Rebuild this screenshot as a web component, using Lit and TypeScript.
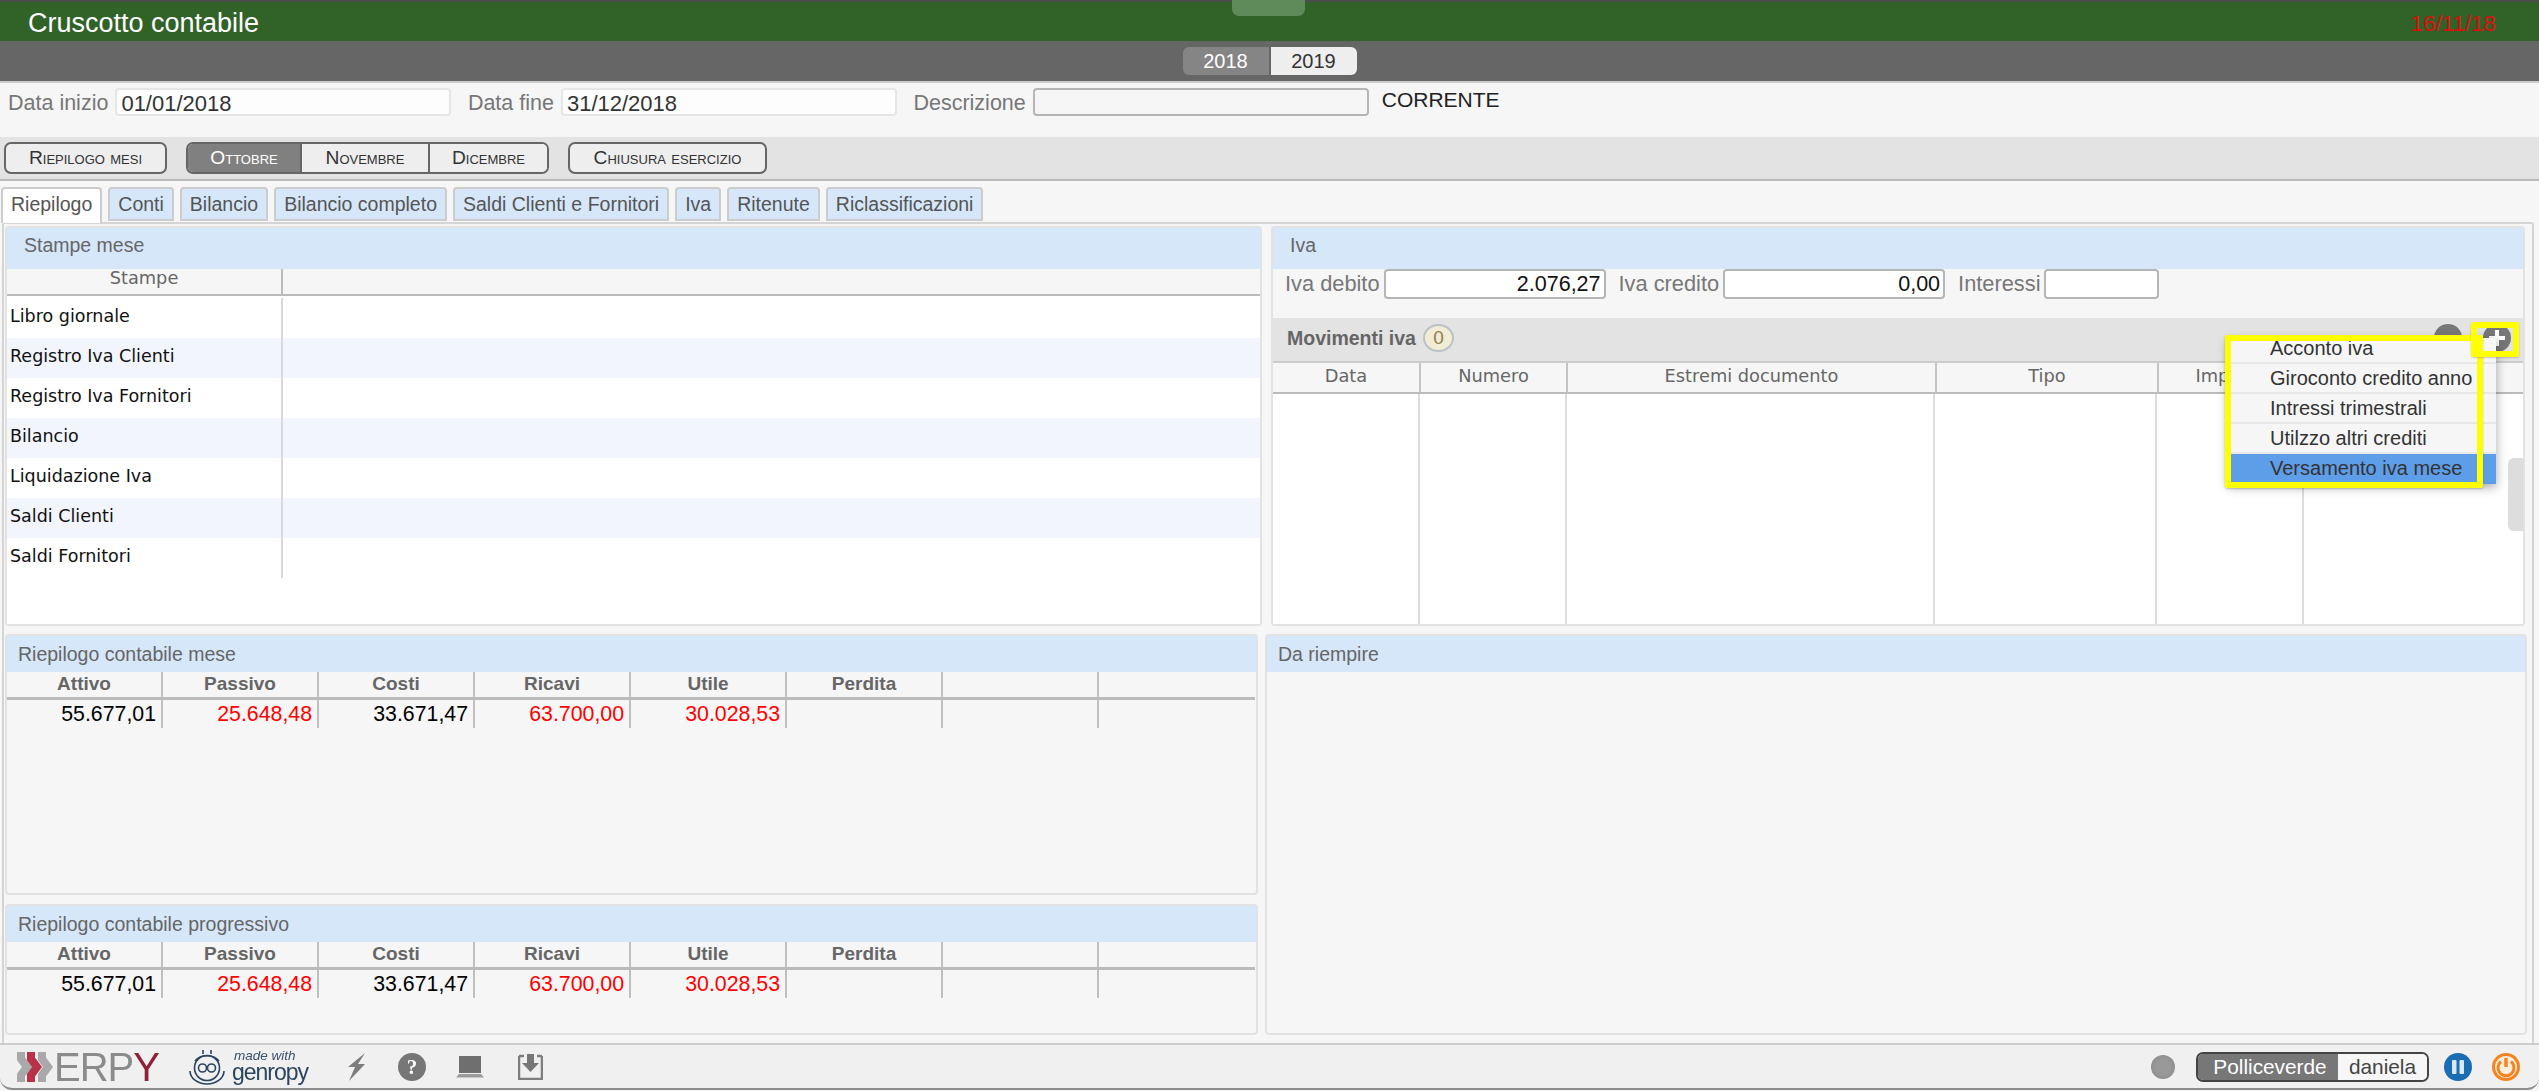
import { LitElement, html, css, svg } from 'lit';
import { customElement } from 'lit/decorators.js';

const SANS = css`"Liberation Sans", Arial, sans-serif`;
const GRID_FONT = css`"DejaVu Sans", Verdana, sans-serif`;

const TABS = ['Riepilogo', 'Conti', 'Bilancio', 'Bilancio completo', 'Saldi Clienti e Fornitori', 'Iva', 'Ritenute', 'Riclassificazioni'];
const STAMPE = ['Libro giornale', 'Registro Iva Clienti', 'Registro Iva Fornitori', 'Bilancio', 'Liquidazione Iva', 'Saldi Clienti', 'Saldi Fornitori'];
const MENU = ['Acconto iva', 'Giroconto credito anno', 'Intressi trimestrali', 'Utilzzo altri crediti', 'Versamento iva mese'];
const MOV_COLS = ['Data', 'Numero', 'Estremi documento', 'Tipo', 'Importo', ''];
const HEADS = ['Attivo', 'Passivo', 'Costi', 'Ricavi', 'Utile', 'Perdita', '', ''];
const VALUES = [
  { v: '55.677,01', red: false },
  { v: '25.648,48', red: true },
  { v: '33.671,47', red: false },
  { v: '63.700,00', red: true },
  { v: '30.028,53', red: true },
  { v: '', red: false },
  { v: '', red: false },
  { v: '', red: false },
];

@customElement('app-root')
export class AppRoot extends LitElement {
  static styles = css`
    :host {
      display: block;
      font-family: ${SANS};
      color: #333;
    }

    .app {
      height: 1091px;
      display: flex;
      flex-direction: column;
      background: #f6f6f6;
      overflow: hidden;
    }

    .title-bar {
      position: relative;
      height: 41px;
      flex: none;
      box-sizing: border-box;
      border-top: 2px solid #4c4c4c;
      background: #316228;
      display: flex;
      align-items: center;
      justify-content: space-between;
      padding: 3px 43px 0 28px;
      color: #fff;
      font-size: 27px;
    }
    .title-bar .date { color: #e00d0d; font-size: 22.3px; margin-top: 2px; }
    .handle {
      position: absolute;
      left: 1232px;
      top: -2px;
      width: 73px;
      height: 16px;
      background: #5f8a59;
      border-radius: 0 0 7px 7px;
    }

    .year-bar {
      height: 42px;
      flex: none;
      box-sizing: border-box;
      background: #666;
      border-bottom: 2px solid #ccc;
      display: flex;
      justify-content: center;
      padding-top: 6px;
    }
    .years { display: flex; height: 28px; }
    .years div {
      width: 86px;
      display: flex;
      align-items: center;
      justify-content: center;
      font-size: 20px;
    }
    .years .off { background: #858585; color: #fff; border-radius: 6px 0 0 6px; margin-right: 2px; }
    .years .on { background: #eee; color: #333; border-radius: 0 6px 6px 0; }

    .form-row {
      height: 54px;
      flex: none;
      display: flex;
      align-items: flex-start;
      padding: 5px 0 0 8px;
      box-sizing: border-box;
      font-size: 21.5px;
      color: #777;
    }
    .label { line-height: 31px; margin-right: 7px; white-space: nowrap; }
    .field {
      box-sizing: border-box;
      height: 28px;
      width: 336px;
      border: 2px solid #e6e6e6;
      border-radius: 4px;
      background: #fdfdfd;
      color: #333;
      font-size: 22px;
      line-height: 27px;
      padding: 0 4px;
      margin-right: 16.5px;
    }
    .field.dark { border-color: #b5b5b5; background: #f6f6f6; margin-right: 13px; }
    .corrente { color: #222; font-size: 21px; line-height: 20px; margin-top: 2px; }

    .toolbar {
      height: 44px;
      flex: none;
      box-sizing: border-box;
      background: #e3e3e3;
      border-bottom: 2px solid #bbb;
      display: flex;
      padding: 5px 0 0 4px;
    }
    .btn {
      box-sizing: border-box;
      height: 32px;
      border: 2px solid #666;
      border-radius: 7px;
      background: #eee;
      color: #333;
      font-variant: small-caps;
      font-size: 19.2px;
      display: flex;
      align-items: center;
      justify-content: center;
    }
    .btn.riepilogo { width: 163px; margin-right: 19px; }
    .btn.chiusura { width: 199px; margin-left: 19px; }
    .segment { display: flex; height: 32px; width: 363px; box-sizing: border-box; border: 2px solid #666; border-radius: 7px; overflow: hidden; }
    .segment div {
      display: flex;
      align-items: center;
      justify-content: center;
      background: #eee;
      font-variant: small-caps;
      font-size: 19.2px;
      border-right: 2px solid #666;
      box-sizing: border-box;
    }
    .segment div:nth-child(1) { width: 114px; background: #808080; color: #fff; }
    .segment div:nth-child(2) { width: 128px; }
    .segment div:nth-child(3) { flex: 1; border-right: none; }

    .tabs {
      height: 41px;
      flex: none;
      box-sizing: border-box;
      display: flex;
      gap: 6px;
      padding: 6px 0 0 1px;
      position: relative;
      z-index: 1;
    }
    .tab {
      box-sizing: border-box;
      height: 34px;
      border: 2px solid #ccc;
      border-radius: 4px 4px 0 0;
      background: #d6e7fa;
      color: #555;
      font-size: 19.5px;
      line-height: 30px;
      padding: 0 8px;
      white-space: nowrap;
    }
    .tab.active { background: #fff; height: 36px; border-bottom: none; }

    .workspace {
      flex: 1;
      min-height: 0;
      margin: 0 5px 0 2px;
      border: 2px solid #d4d4d4;
      border-bottom: none;
      border-radius: 3px 3px 0 0;
      padding: 2px 0 0 1px;
      display: flex;
      flex-direction: column;
      gap: 8px;
      box-sizing: border-box;
    }
    .top-row { display: grid; grid-template-columns: 1257px 1254px; gap: 9px; height: 400px; flex: none; }
    .bottom-row { display: grid; grid-template-columns: 1253px 1262px; gap: 7px; height: 401px; flex: none; }
    .stack { display: grid; grid-template-rows: 261px 131px; gap: 9px; min-height: 0; }

    .panel {
      position: relative;
      box-sizing: border-box;
      border: 2px solid #e2e2e2;
      border-radius: 4px;
      background: #f6f6f6;
      display: flex;
      flex-direction: column;
      min-height: 0;
    }
    .panel-head {
      flex: none;
      box-sizing: border-box;
      background: #d6e7fa;
      color: #666;
      font-size: 19.5px;
      display: flex;
      align-items: center;
    }
    .panel-head.tall { height: 41px; padding: 0 0 6px 17px; }
    .panel-head.short { height: 36px; padding-left: 11px; }

    .stampe-head {
      flex: none;
      display: grid;
      grid-template-columns: 276px 1fr;
      height: 27px;
      box-sizing: border-box;
      border-bottom: 2px solid #bbb;
      font-family: ${GRID_FONT};
      font-size: 17.8px;
      color: #666;
    }
    .stampe-head div { text-align: center; line-height: 18px; border-right: 2px solid #bbb; }
    .stampe-head div:last-child { border-right: none; }
    .stampe-body { flex: 1; background: #fff; padding-top: 2px; }
    .stampe-row {
      display: grid;
      grid-template-columns: 276px 1fr;
      height: 40px;
      font-family: ${GRID_FONT};
      font-size: 17.5px;
      color: #111;
      line-height: 37px;
    }
    .stampe-row:nth-child(even) { background: #f2f6fc; }
    .stampe-row div:first-child { border-right: 2px solid #d8d8d8; padding-left: 3px; box-sizing: border-box; }

    .iva-form {
      flex: none;
      height: 49px;
      box-sizing: border-box;
      display: flex;
      align-items: flex-start;
      padding: 0 0 0 12px;
      font-size: 21.8px;
      color: #777;
    }
    .iva-form .label { line-height: 30px; margin-right: 4px; }
    .num {
      box-sizing: border-box;
      height: 30px;
      border: 2px solid #b5b5b5;
      border-radius: 4px;
      background: #fff;
      color: #111;
      font-size: 21.5px;
      line-height: 26px;
      text-align: right;
      padding-right: 3px;
      margin-right: 13px;
    }
    .num.w222 { width: 222px; }
    .num.w115 { width: 115px; margin-right: 0; }

    .mov-bar {
      flex: none;
      height: 43px;
      box-sizing: border-box;
      background: #e3e3e3;
      display: flex;
      align-items: center;
      padding: 0 12px 3px 14px;
      font-size: 19.5px;
      font-weight: 700;
      color: #666;
    }
    .badge {
      box-sizing: border-box;
      width: 31px;
      height: 28px;
      margin-left: 7px;
      border: 2px solid #b8c2c8;
      border-radius: 50%;
      background: #f3ecd4;
      color: #8a8050;
      font-weight: 400;
      font-size: 19px;
      display: flex;
      align-items: center;
      justify-content: center;
    }
    .mov-actions { margin-left: auto; display: flex; gap: 21px; }
    .mov-actions svg { display: block; }

    .mov-head, .mov-body { display: grid; }
    .mov-head {
      grid-template-columns: 148px 147px 369px 222px 145px 1fr;
      flex: none;
      height: 33px;
      box-sizing: border-box;
      border-top: 2px solid #ccc;
      border-bottom: 2px solid #bbb;
      font-family: ${GRID_FONT};
      font-size: 17.8px;
      color: #666;
    }
    .mov-head div { text-align: center; line-height: 25px; border-right: 2px solid #c4c4c4; }
    .mov-head div:last-child { border-right: none; }
    .mov-body { grid-template-columns: 147px 147px 368px 222px 147px 1fr; flex: 1; background: #fff; }
    .mov-body div { border-right: 2px solid #ddd; }
    .mov-body div:last-child { border-right: none; }

    .scroll-thumb {
      position: absolute;
      left: 1235px;
      top: 230px;
      width: 15px;
      height: 73px;
      background: #ddd;
      border-radius: 6px 0 0 6px;
    }
    .menu {
      position: absolute;
      left: 955px;
      top: 110px;
      width: 268px;
      height: 146px;
      overflow: hidden;
      background: #f6f6f6;
      box-shadow: 0 3px 10px rgba(0, 0, 0, .35);
      z-index: 2;
      font-size: 20px;
      color: #333;
    }
    .menu-list { margin-top: -4px; }
    .menu-item {
      box-sizing: border-box;
      height: 30px;
      line-height: 28px;
      padding-left: 42px;
      border-bottom: 2px solid #e8e8e8;
      white-space: nowrap;
    }
    .menu-item:last-child { background: #5e9de8; border-bottom: none; }
    .mark {
      position: absolute;
      box-sizing: border-box;
      border: 6px solid #ff0;
      z-index: 3;
      box-shadow: 0 1px 2px rgba(0, 0, 0, .2);
    }
    .mark.list { left: 952px; top: 107px; width: 258px; height: 153px; border-radius: 2px; }
    .mark.plus { left: 1198px; top: 94px; width: 48px; height: 35px; border-radius: 2px; }

    .sum-head, .sum-row {
      display: grid;
      grid-template-columns: repeat(8, 156px);
      width: 1248px;
    }
    .sum-head {
      flex: none;
      height: 28px;
      box-sizing: border-box;
      border-bottom: 3px solid #bbb;
      font-size: 19px;
      font-weight: 700;
      color: #666;
    }
    .sum-head div { text-align: center; line-height: 24px; border-right: 2px solid #c0c0c0; }
    .sum-row { height: 28px; font-size: 21.3px; color: #000; }
    .sum-row div { text-align: right; line-height: 28px; padding-right: 5px; border-right: 2px solid #c0c0c0; box-sizing: border-box; }
    .sum-head div:last-child, .sum-row div:last-child { border-right: none; }
    .sum-row .red { color: #f00; }

    .footer {
      flex: none;
      height: 47px;
      margin-bottom: 1px;
      box-sizing: border-box;
      border-top: 2px solid #ccc;
      border-bottom: 2px solid #8c8c8c;
      border-radius: 0 0 12px 12px;
      background: #f0f0f0;
      display: flex;
      align-items: center;
      padding: 0 19px 0 17px;
    }
    .foot-left { display: flex; align-items: center; filter: blur(.4px); }
    .erpy-mark { display: block; margin-right: 1px; }
    .erpy-word { font-size: 40px; line-height: 30px; color: #8b8b8b; letter-spacing: -1px; width: 133px; }
    .erpy-word span { color: #8f2035; }
    .gen-mark { display: block; margin-right: 5px; }
    .gen-word { color: #2b4560; width: 114px; line-height: 1; }
    .gen-word small { display: block; font-style: italic; font-size: 13.5px; color: #3c5068; margin-left: 2px; }
    .gen-word b { display: block; font-weight: 400; font-size: 23px; letter-spacing: -1px; margin-top: -1px; }
    .tool { display: block; }
    .tool.bolt { margin-right: 32px; }
    .tool.help { margin-right: 30px; }
    .tool.laptop { margin-right: 34px; }

    .foot-right { margin-left: auto; display: flex; align-items: center; }
    .dot {
      width: 24px;
      height: 24px;
      border-radius: 50%;
      background: radial-gradient(circle, #999 40%, #868686 100%);
      margin-right: 21px;
    }
    .user {
      display: flex;
      box-sizing: border-box;
      width: 233px;
      height: 30px;
      border: 2px solid #444;
      border-radius: 7px;
      overflow: hidden;
      font-size: 20.8px;
      line-height: 26px;
      margin-right: 15px;
    }
    .user .org { width: 140px; background: #777; color: #fff; text-align: center; padding-left: 4px; box-sizing: border-box; }
    .user .name { flex: 1; background: #f6f6f6; color: #444; text-align: center; }
    .round { display: block; }
    .round.pause { margin-right: 20px; }
  `;

  private sumTable() {
    return html`
      <div class="sum-head">${HEADS.map((h) => html`<div>${h}</div>`)}</div>
      <div class="sum-row">${VALUES.map((c) => html`<div class=${c.red ? 'red' : ''}>${c.v}</div>`)}</div>
    `;
  }

  private erpyMark() {
    const wave = (x: number, color: string) => svg`
      <path d="M${x} 0v7l6 8-6 8v7" fill="none" stroke=${color} stroke-width="8" />`;
    return html`<svg class="erpy-mark" width="36" height="30" viewBox="0 0 36 30">
      ${wave(4, '#a9a9a9')}${wave(14, '#b8324a')}${wave(25, '#a9a9a9')}
    </svg>`;
  }

  private genMark() {
    return html`<svg class="gen-mark" width="40" height="36" viewBox="0 0 40 36" fill="none" stroke="#2b4560" stroke-width="1.6">
      <path d="M3 22a17 13 0 0 0 34 0" />
      <path d="M8 12a15 13 0 0 1 24 0" />
      <path d="M16 5V1M24 5V1" />
      <circle cx="20" cy="19" r="12.5" />
      <circle cx="15.5" cy="19" r="4" />
      <circle cx="24.5" cy="19" r="4" />
    </svg>`;
  }

  render() {
    return html`
      <div class="app">
        <div class="title-bar">
          <span>Cruscotto contabile</span>
          <span class="date">16/11/18</span>
          <div class="handle"></div>
        </div>

        <div class="year-bar">
          <div class="years"><div class="off">2018</div><div class="on">2019</div></div>
        </div>

        <div class="form-row">
          <span class="label">Data inizio</span><div class="field">01/01/2018</div>
          <span class="label">Data fine</span><div class="field">31/12/2018</div>
          <span class="label">Descrizione</span><div class="field dark"></div>
          <span class="corrente">CORRENTE</span>
        </div>

        <div class="toolbar">
          <div class="btn riepilogo">Riepilogo mesi</div>
          <div class="segment"><div>Ottobre</div><div>Novembre</div><div>Dicembre</div></div>
          <div class="btn chiusura">Chiusura esercizio</div>
        </div>

        <div class="tabs">
          ${TABS.map((t, i) => html`<div class="tab ${i === 0 ? 'active' : ''}">${t}</div>`)}
        </div>

        <div class="workspace">
          <div class="top-row">
            <section class="panel">
              <div class="panel-head tall">Stampe mese</div>
              <div class="stampe-head"><div>Stampe</div><div></div></div>
              <div class="stampe-body">
                ${STAMPE.map((s) => html`<div class="stampe-row"><div>${s}</div><div></div></div>`)}
              </div>
            </section>

            <section class="panel">
              <div class="panel-head tall">Iva</div>
              <div class="iva-form">
                <span class="label">Iva debito</span><div class="num w222">2.076,27</div>
                <span class="label">Iva credito</span><div class="num w222">0,00</div>
                <span class="label">Interessi</span><div class="num w115"></div>
              </div>
              <div class="mov-bar">
                <span>Movimenti iva</span>
                <span class="badge">0</span>
                <div class="mov-actions">
                  <svg width="28" height="28" viewBox="0 0 28 28">
                    <circle cx="14" cy="14" r="14" fill="#777" />
                    <rect x="6" y="12" width="16" height="4" fill="#fff" />
                  </svg>
                  <svg width="28" height="28" viewBox="0 0 28 28">
                    <circle cx="14" cy="14" r="14" fill="#777" />
                    <path d="M12 6h4v6h6v4h-6v6h-4v-6H6v-4h6z" fill="#fff" />
                  </svg>
                </div>
              </div>
              <div class="mov-head">${MOV_COLS.map((c) => html`<div>${c}</div>`)}</div>
              <div class="mov-body">${MOV_COLS.map(() => html`<div></div>`)}</div>
              <div class="scroll-thumb"></div>
              <div class="menu">
                <div class="menu-list">${MENU.map((m) => html`<div class="menu-item">${m}</div>`)}</div>
              </div>
              <div class="mark list"></div>
              <div class="mark plus"></div>
            </section>
          </div>

          <div class="bottom-row">
            <div class="stack">
              <section class="panel">
                <div class="panel-head short">Riepilogo contabile mese</div>
                ${this.sumTable()}
              </section>
              <section class="panel">
                <div class="panel-head short">Riepilogo contabile progressivo</div>
                ${this.sumTable()}
              </section>
            </div>
            <section class="panel">
              <div class="panel-head short">Da riempire</div>
            </section>
          </div>
        </div>

        <div class="footer">
          <div class="foot-left">
            ${this.erpyMark()}
            <div class="erpy-word">ERP<span>Y</span></div>
            ${this.genMark()}
            <div class="gen-word"><small>made with</small><b>genropy</b></div>
            <svg class="tool bolt" width="20" height="28" viewBox="0 0 20 28">
              <path d="M19 0L2 14h7L3 28l16-17h-7z" fill="#7d7d7d" />
            </svg>
            <svg class="tool help" width="28" height="28" viewBox="0 0 28 28">
              <circle cx="14" cy="14" r="14" fill="#777" />
              <text x="14" y="21" text-anchor="middle" font-family="Liberation Serif, serif" font-weight="700" font-size="21" fill="#fff">?</text>
            </svg>
            <svg class="tool laptop" width="28" height="22" viewBox="0 0 28 22">
              <rect x="3" y="0" width="22" height="17" fill="#6f6f6f" />
              <path d="M3 18h22l3 3.500H0z" fill="#9a9a9a" />
            </svg>
            <svg class="tool" width="25" height="27" viewBox="0 0 25 27">
              <path d="M1 3h5M19 3h5M1 3v23h23V3" fill="none" stroke="#7d7d7d" stroke-width="2.5" />
              <path d="M9 1h7v9h5l-8.500 9L4 10h5z" fill="#777" />
            </svg>
          </div>
          <div class="foot-right">
            <div class="dot"></div>
            <div class="user"><div class="org">Polliceverde</div><div class="name">daniela</div></div>
            <svg class="round pause" width="28" height="28" viewBox="0 0 28 28">
              <circle cx="14" cy="14" r="14" fill="#1a6db5" />
              <rect x="8" y="7" width="4.500" height="14" rx="1" fill="#d8e8f6" />
              <rect x="15.500" y="7" width="4.500" height="14" rx="1" fill="#d8e8f6" />
            </svg>
            <svg class="round" width="28" height="28" viewBox="0 0 28 28">
              <circle cx="14" cy="14" r="14" fill="#f5831f" />
              <circle cx="14" cy="14" r="11" fill="#fbeedd" />
              <path d="M9 8.500a8 8 0 1 0 10 0" fill="none" stroke="#f5831f" stroke-width="3" />
              <path d="M14 5v9" stroke="#f5831f" stroke-width="3.500" />
            </svg>
          </div>
        </div>
      </div>
    `;
  }
}
